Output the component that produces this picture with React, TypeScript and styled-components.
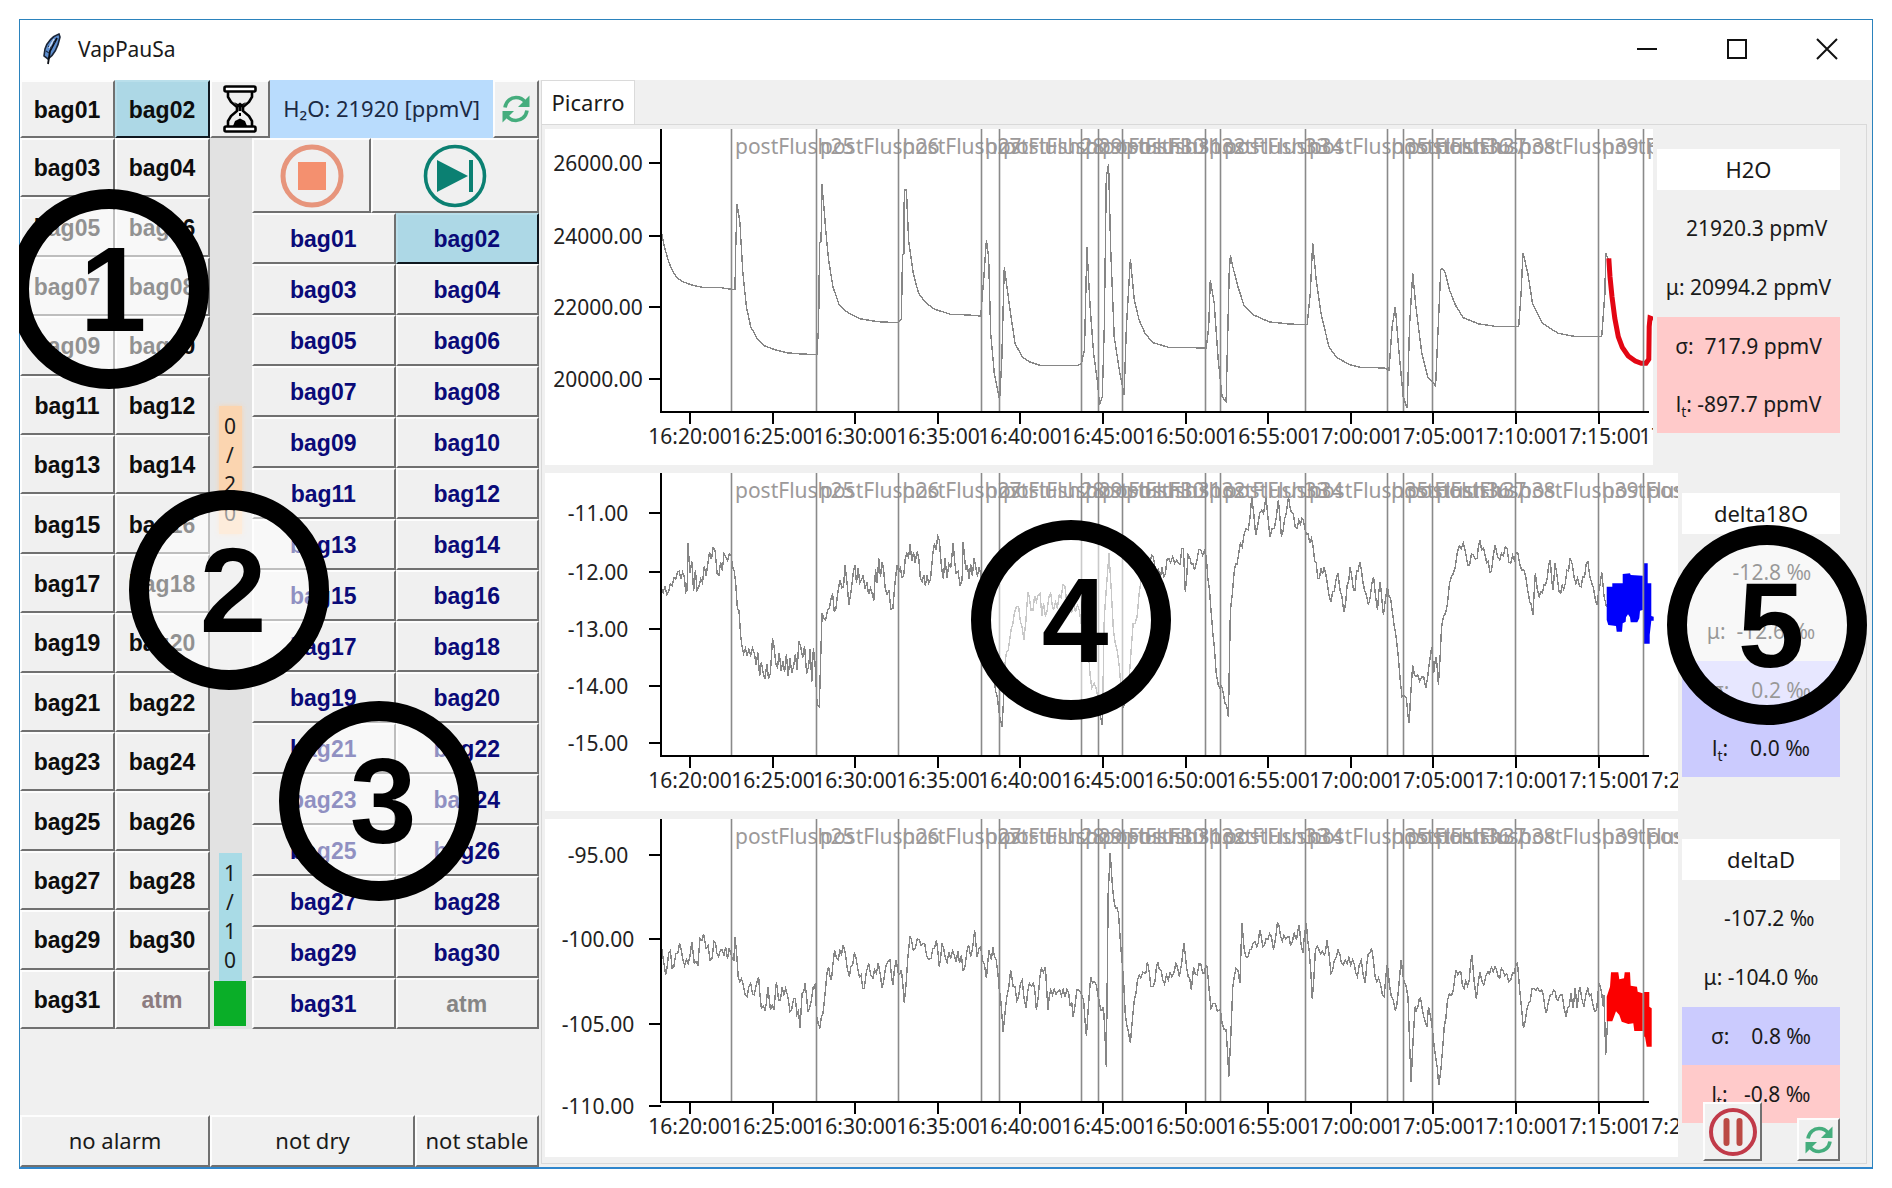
import React from "react";
import styled, { createGlobalStyle } from "styled-components";

const UI_FONT = `"Noto Sans", "Open Sans", sans-serif`;
const BOLD_FONT = `"Liberation Sans", Arial, sans-serif`;

const GlobalStyle = createGlobalStyle`
  *, *::before, *::after { box-sizing: border-box; }
  body { margin: 0; background: #fff; font-family: ${UI_FONT}; color: #1a1a1a; }
  button { font-family: inherit; color: inherit; margin: 0; }
`;

/* ---------- window frame ---------- */

const Desktop = styled.div`
  padding: 19px;
`;

const Window = styled.div`
  position: relative;
  display: flex;
  flex-direction: column;
  min-width: 1400px;
  min-height: calc(100vh - 38px);
  border: 1px solid #2b83bd;
  border-bottom: 2px solid #2f86cc;
  background: #f0f0f0;
`;

const TitleBar = styled.header`
  display: flex;
  align-items: center;
  height: 60px;
  padding: 0 34px 2px 22px;
  background: #fff;
`;

const Title = styled.h1`
  flex: 1;
  margin: 0 0 0 16px;
  font-size: 21px;
  line-height: 28px;
  font-weight: 400;
`;

const WindowControls = styled.div`
  display: flex;
  gap: 68px;
`;

const ControlButton = styled.button`
  display: block;
  width: 22px;
  height: 22px;
  padding: 0;
  border: 0;
  background: none;
`;

const Body = styled.div`
  flex: 1;
  display: flex;
  align-items: stretch;
`;

/* ---------- left side ---------- */

const Controls = styled.section`
  display: flex;
  flex-direction: column;
  flex: none;
  width: 519px;
`;

const RaisedButton = styled.button<{ $active?: boolean }>`
  display: flex;
  align-items: center;
  justify-content: center;
  min-width: 0;
  padding: 0;
  border: 2px solid;
  border-color: ${(p) => (p.$active ? "#b9dfeb #101820 #101820 #b9dfeb" : "#fdfdfd #707070 #707070 #fdfdfd")};
  background: ${(p) => (p.$active ? "#add8e6" : "#f0f0f0")};
`;

const BagButton = styled(RaisedButton)<{ $tone: string }>`
  padding: 1px 1px 0 0;
  font-family: ${BOLD_FONT};
  font-size: 23px;
  line-height: 26px;
  font-weight: 700;
  color: ${(p) => p.$tone};
`;

const StatusButton = styled(RaisedButton)`
  padding-bottom: 2px;
  font-size: 22px;
  line-height: 28px;
`;

const TopRow = styled.div`
  display: grid;
  grid-template-columns: 95px 95px 60px 1fr 46px;
  height: 58px;
`;

const Reading = styled.output`
  display: flex;
  align-items: center;
  justify-content: center;
  padding-bottom: 2px;
  background: #b9dcfd;
  font-size: 22px;
  line-height: 28px;
  color: #1c2a44;
`;

const Columns = styled.div`
  flex: 1;
  display: grid;
  grid-template-columns: 190px 42px 1fr;
`;

const ValveGrid = styled.div`
  display: grid;
  grid-template-columns: 1fr 1fr;
  grid-template-rows: repeat(15, 1fr);
`;

const Progress = styled.div`
  display: flex;
  flex-direction: column;
  align-items: center;
  padding: 268px 5px 3px 3px;
  background: #e2e2e2;
`;

const Counter = styled.div<{ $color: string; $soft?: boolean }>`
  display: flex;
  flex-direction: column;
  align-items: center;
  width: 23px;
  padding: 6px 0;
  background: ${(p) => p.$color};
  box-shadow: ${(p) => (p.$soft ? `0 0 5px ${p.$color}` : "none")};
  font-size: 21px;
  line-height: 29px;
`;

const Fill = styled.div`
  width: 32px;
  height: 45px;
  background: #0aae28;
`;

const Spring = styled.div`
  flex: 1;
`;

const Sequence = styled.div`
  display: flex;
  flex-direction: column;
`;

const Transport = styled.div`
  display: grid;
  grid-template-columns: 119px 1fr;
  height: 75px;
`;

const SequenceGrid = styled.div`
  flex: 1;
  display: grid;
  grid-template-columns: 1fr 1fr;
  grid-template-rows: repeat(16, 1fr);
`;

const StatusRow = styled.div`
  display: grid;
  grid-template-columns: 190px 205px 1fr;
  height: 52px;
  margin-top: 86px;
`;

/* ---------- right side ---------- */

const Notebook = styled.section`
  flex: 1;
  min-width: 0;
  display: flex;
  flex-direction: column;
  padding: 0 5px 3px 2px;
`;

const TabStrip = styled.div`
  display: flex;
  height: 44px;
`;

const Tab = styled.button`
  width: 94px;
  padding: 0 0 2px;
  border: 1px solid #dadada;
  border-bottom: 0;
  background: #fff;
  font-size: 22px;
  line-height: 28px;
`;

const Page = styled.div`
  flex: 1;
  display: flex;
  flex-direction: column;
  gap: 8px;
  padding: 4px 0 0 3px;
  border: 1px solid #d9d9d9;
`;

const Panel = styled.article`
  display: flex;
`;

const ChartArea = styled.div<{ $height: number }>`
  flex: 1;
  min-width: 0;
  height: ${(p) => p.$height}px;
  overflow: hidden;
  background: #fff;

  svg { display: block; }
  text { font-family: ${UI_FONT}; font-size: 21px; }
`;

const Stats = styled.div<{ $width: number }>`
  flex: none;
  width: ${(p) => p.$width}px;
  padding: 20px 26px 0 4px;
`;

const StatTitle = styled.h2`
  margin: 0 0 9px;
  padding: 6px 0;
  background: #fff;
  font-size: 22px;
  line-height: 29px;
  font-weight: 400;
  text-align: center;
`;

const Stat = styled.p<{ $bg?: string }>`
  margin: 0;
  padding: 15px 0;
  background: ${(p) => p.$bg || "transparent"};
  font-size: 21px;
  line-height: ${(p) => (p.$bg ? 28 : 29)}px;
  text-align: center;
  white-space: pre;

  sub { font-size: 14px; line-height: 0; }
`;

const FloatingTools = styled.div`
  position: absolute;
  right: 32px;
  bottom: 6px;
  display: flex;
  align-items: flex-end;
  gap: 35px;
`;

const ToolButton = styled(RaisedButton)<{ $size: number }>`
  width: ${(p) => p.$size}px;
  height: ${(p) => p.$size}px;
`;

/* ---------- numbered callouts ---------- */

const CalloutLayer = styled.div`
  position: absolute;
  inset: -1px;
  overflow: hidden;
  pointer-events: none;
`;

const Callout = styled.div<{ $x: number; $y: number }>`
  position: absolute;
  left: ${(p) => p.$x}px;
  top: ${(p) => p.$y}px;
  display: flex;
  align-items: center;
  justify-content: center;
  width: 200px;
  height: 200px;
  padding-left: 8px;
  border: 20px solid #000;
  border-radius: 50%;
  background: rgba(255, 255, 255, 0.55);
  background-clip: padding-box;
  color: #000;
  font-family: ${BOLD_FONT};
  font-size: 120px;
  line-height: 160px;
  font-weight: 700;
`;

/* ---------- icons ---------- */

const Feather = () => (
  <svg width="20" height="32" viewBox="0 0 20 32" aria-hidden="true">
    <path d="M17 1 C11 3 5 9 3 16 L2 23 L6 26 C12 22 16 14 18 4 Z" fill="#5e8fd0" stroke="#1b2638" strokeWidth="1.6" />
    <path d="M15 5 L8 18 L6 31" fill="none" stroke="#0c0f16" strokeWidth="1.8" />
    <path d="M4 18 L7 20 M6 13 L10 15 M10 8 L13 10" stroke="#20304a" strokeWidth="1.2" />
    <path d="M12 6 L7 15" stroke="#cfe0f6" strokeWidth="1.4" />
  </svg>
);

const Hourglass = () => (
  <svg width="34" height="48" viewBox="0 0 34 48" aria-hidden="true" fill="none" stroke="#000" strokeWidth="2.6">
    <rect x="1.5" y="1.5" width="31" height="5" rx="1.5" fill="#fff" />
    <rect x="1.5" y="41.5" width="31" height="5" rx="1.5" fill="#fff" />
    <path d="M5 7 V12 L8 17 L14 22 V26 L8 31 L5 36 V41 M29 7 V12 L26 17 L20 22 V26 L26 31 L29 36 V41" fill="none" />
    <path d="M11 17 L15 19 L17 17.500 L19 19 L23 17 L18.500 22.500 V26 H15.500 V22.500 Z" fill="#000" stroke="none" />
    <path d="M16 28h2v3h-2z" fill="#000" stroke="none" />
    <path d="M10 41 L12 36 L17 33.500 L22 36 L24 41 Z" fill="#000" stroke="none" />
  </svg>
);

const Refresh = () => (
  <svg width="28" height="28" viewBox="0 0 28 28" aria-hidden="true">
    <path d="M3 12.500 C4 6 9 2.500 14 2.500 C18 2.500 21 4 23 7" fill="none" stroke="#45ad7d" strokeWidth="3.6" />
    <path d="M27.500 0.500 V12 H16 Z" fill="#45ad7d" />
    <path d="M25 15.500 C24 22 19 25.500 14 25.500 C10 25.500 7 24 5 21" fill="none" stroke="#45ad7d" strokeWidth="3.6" />
    <path d="M0.500 27.500 V16 H12 Z" fill="#45ad7d" />
  </svg>
);

const Stop = () => (
  <svg width="64" height="64" viewBox="0 0 64 64" aria-hidden="true">
    <circle cx="32" cy="32" r="29" fill="none" stroke="#e7957c" strokeWidth="5" />
    <rect x="18" y="18" width="28" height="28" fill="#f4906f" />
  </svg>
);

const Skip = () => (
  <svg width="64" height="64" viewBox="0 0 64 64" aria-hidden="true">
    <circle cx="32" cy="32" r="29.500" fill="none" stroke="#0b8072" strokeWidth="3.6" />
    <path d="M14 16 L45 32 L14 48 Z" fill="#0b8072" />
    <rect x="46" y="16" width="4" height="32" fill="#0b8072" />
  </svg>
);

const Pause = () => (
  <svg width="50" height="50" viewBox="0 0 50 50" aria-hidden="true">
    <circle cx="25" cy="25" r="22" fill="none" stroke="#c13a49" strokeWidth="4" />
    <path d="M18.500 14 V36 M31.500 14 V36" stroke="#bb4a44" strokeWidth="6" strokeLinecap="round" />
  </svg>
);

/* ---------- charts ---------- */

type Mark = [x: number, y: number, spread?: number];

interface Piece {
  scaleX: number;
  offsetX: number;
  marks: Mark[];
}

interface ChartSpec {
  id: string;
  height: number;
  axisY: number;
  ticks: [label: string, y: number][];
  offsetY: number;
  noise: number;
  pieces: Piece[];
  current: React.ReactNode;
}

/* flush events and five-minute ticks share one time axis on all charts */
const EVENTS = [186, 271, 353, 436, 454, 536, 553, 577, 660, 675, 760, 842, 858, 887, 970, 1053, 1098];
const TIMES = ["16:20", "16:25", "16:30", "16:35", "16:40", "16:45", "16:50", "16:55", "17:00", "17:05", "17:10", "17:15", "17:20"];

const jitter = (n: number) => {
  const v = Math.sin(n * 127.1 + 3.7) * 43758.5453;
  return (0.35 + 0.9 * (v - Math.floor(v))) * (n % 2 ? 1 : -1);
};

/* joins the marks, adding measurement noise between them */
function trace(pieces: Piece[], offsetY: number, noise = 0): string {
  const out: string[] = [];
  let n = 0;
  pieces.forEach(({ scaleX, offsetX, marks }) => {
    marks.forEach(([x, y, spread = 0], i) => {
      const px = x / scaleX + offsetX;
      const py = y / 3 + offsetY;
      out.push(`${px.toFixed(1)},${py.toFixed(1)}`);
      const next = marks[i + 1];
      const amount = Math.max(spread, noise);
      if (!next || !amount) return;
      const nx = next[0] / scaleX + offsetX;
      const ny = next[1] / 3 + offsetY;
      const steps = Math.max(1, Math.round((nx - px) / 1.8));
      for (let k = 1; k < steps; k++) {
        n += 1;
        const t = k / steps;
        const s = (amount / 3) * jitter(n);
        out.push(`${(px + (nx - px) * t).toFixed(1)},${(py + (ny - py) * t + s).toFixed(1)}`);
      }
    });
  });
  return out.join(" ");
}

const first = (marks: Mark[]): Piece => ({ scaleX: 2.8, offsetX: -5, marks });
const second = (marks: Mark[]): Piece => ({ scaleX: 2.529, offsetX: 515, marks });

const outline = (pts: number[][], offsetY: number) =>
  pts.map(([x, y]) => `${(x / 3 + 1035).toFixed(1)},${(y / 3 + offsetY).toFixed(1)}`).join(" ");

const H2O: ChartSpec = {
  id: "h2o",
  height: 336,
  axisY: 283,
  ticks: [["26000.00", 34], ["24000.00", 107], ["22000.00", 178], ["20000.00", 250]],
  offsetY: -69,
  noise: 0,
  pieces: [
    first([[340,515],[347,555],[360,605],[372,635],[385,655],[400,665],[425,675],[455,682],[500,682],[535,688],[546,688],[548,565],[552,432],[560,490],[562,530],[568,640],[578,740],[590,800],[608,835],[628,857],[660,870],[690,878],[720,881],[775,884],[780,800],[783,550],[787,545],[789,373],[795,440],[800,510],[808,600],[820,680],[838,735],[862,758],[895,776],[945,785],[1003,788],[1012,778],[1015,585],[1019,580],[1020,390],[1026,390],[1032,540],[1045,640],[1060,700],[1080,728],[1105,748],[1150,763],[1200,765],[1234,768],[1243,650],[1250,540],[1256,590],[1262,820],[1272,940],[1287,1020],[1293,900],[1297,740],[1300,620],[1315,740],[1330,850],[1350,890],[1370,905],[1400,916],[1505,916],[1515,912]]),
    second([[53,915],[62,870],[68,560],[76,740],[85,880],[95,970],[100,1035],[107,1010],[112,800],[117,350],[123,312],[128,560],[137,830],[150,930],[162,1005],[168,800],[178,597],[188,720],[200,780],[215,820],[235,848],[275,862],[370,864],[376,800],[380,660],[390,730],[400,900],[410,1010],[420,1025],[428,640],[431,585],[437,620],[450,680],[465,735],[490,765],[530,786],[580,792],[625,794],[633,700],[639,548],[648,660],[660,760],[680,860],[700,893],[735,915],[760,922],[820,924],[832,930],[840,800],[848,740],[856,860],[868,1010],[878,1045],[884,800],[892,640],[900,740],[915,880],[930,950],[950,977],[958,760],[963,628],[968,626],[974,638],[985,690],[1000,735],[1020,773],[1060,792],[1100,799],[1160,800],[1166,700],[1171,578],[1183,640],[1195,730],[1220,790],[1260,820],[1300,829],[1370,830],[1378,700],[1380,580],[1388,600]]),
  ],
  current: (
    <polyline
      points={trace([second([[1388,595],[1391,650],[1396,710],[1403,775],[1412,830],[1422,862],[1437,888],[1455,903],[1470,910],[1482,910],[1489,898],[1490,800],[1492,774],[1500,778]])], -69)}
      fill="none"
      stroke="#e30613"
      strokeWidth="5"
    />
  ),
};

const D18O: ChartSpec = {
  id: "delta18O",
  height: 338,
  axisY: 283,
  ticks: [["-11.00", 40], ["-12.00", 99], ["-13.00", 156], ["-14.00", 213], ["-15.00", 270]],
  offsetY: -23,
  noise: 12,
  pieces: [
    first([[340,415,10],[360,425,15],[385,365,15],[404,380,25],[412,420],[414,280],[420,370,35],[445,410,20],[470,340,20],[490,300,10],[496,370,20],[520,320,12],[535,315,12],[548,400,20],[562,560],[570,610,15],[600,610,30],[625,670,35],[645,670],[651,565],[660,640,30],[710,650,35],[730,590,30],[752,650,50],[770,640,50],[782,770],[790,490,5],[800,510],[815,445,25],[828,480,25],[840,390],[850,410],[854,345],[865,465],[877,370,25],[900,390,25],[930,430,40],[958,335],[966,410,20],[988,475],[1000,345],[1018,380,20],[1027,310,25],[1060,320,25],[1070,395,15],[1093,390],[1100,310,20],[1118,270],[1124,350,30],[1150,355],[1157,280],[1165,370,25],[1182,390],[1185,275],[1192,360,25],[1220,350,30],[1234,370,15],[1262,560],[1275,720,20],[1287,800,40],[1294,830],[1302,640],[1315,570,10],[1328,490],[1340,470],[1355,570],[1366,425],[1375,480,20],[1395,435,25],[1415,500],[1430,430],[1438,480,20],[1470,410],[1478,470,20],[1510,480],[1535,600],[1545,715],[1552,700],[1562,740]]),
    second([[97,740],[107,826],[112,500],[118,400],[124,310],[135,540,5],[150,650,5],[160,775,10],[170,740],[177,650],[185,520,15],[195,500],[205,390,20],[232,315],[240,350,20],[262,380],[275,325,12],[300,340,15],[312,295],[317,425],[324,315],[340,360,12],[351,300],[370,320],[382,480,5],[395,670],[405,715],[413,730],[426,800],[431,480],[440,370,10],[452,310,15],[465,255,10],[476,240],[485,140],[495,255],[505,190,12],[515,190],[521,140],[531,260],[542,235,10],[552,150],[560,260],[572,190],[578,140],[585,185],[600,235,12],[612,205],[619,235],[640,290,10],[652,385],[668,350],[676,400,15],[685,455],[703,370],[718,485],[734,350],[742,420,20],[758,335],[770,420,20],[780,465],[793,380],[803,480],[810,395],[818,495],[828,410],[840,480],[850,560],[865,740],[876,745],[883,820],[892,645],[900,680],[915,680,15],[925,715],[934,640],[940,590],[945,670],[952,620,35],[957,705],[965,530],[975,490,15],[985,400],[995,370],[1005,305],[1020,280],[1031,345],[1045,315,10],[1055,325],[1062,270],[1075,315,15],[1091,365],[1101,285],[1112,330,10],[1126,290],[1140,340,15],[1158,310],[1168,360],[1178,380],[1188,455],[1196,495],[1202,370],[1212,440],[1228,405,12],[1240,330],[1247,420],[1252,340],[1262,425],[1278,400,15],[1290,325],[1300,380,12],[1318,410],[1335,335],[1345,400],[1358,465],[1370,365],[1376,440],[1382,470]]),
  ],
  current: (
    <g fill="#0000fb">
      <polygon points={outline([[80,380],[97,380],[97,370],[128,370],[128,342],[150,340],[152,345],[188,347],[188,450],[180,452],[178,475],[172,487],[152,487],[150,472],[144,463],[138,472],[137,485],[128,490],[126,515],[110,515],[108,498],[85,495],[80,480]], -13)} />
      <polygon points={outline([[190,310],[203,310],[203,370],[214,370],[214,468],[221,470],[221,482],[214,482],[209,525],[209,551],[190,551]], -13)} />
    </g>
  ),
};

const DELTAD: ChartSpec = {
  id: "deltaD",
  height: 338,
  axisY: 283,
  ticks: [["-95.00", 36], ["-100.00", 120], ["-105.00", 205], ["-110.00", 287]],
  offsetY: -19,
  noise: 12,
  pieces: [
    first([[340,440],[347,490],[352,525],[360,460,20],[375,500,20],[391,430],[400,480,20],[415,490],[425,425],[432,490],[442,495],[448,415],[458,402],[465,445,15],[482,475],[487,425],[500,470,20],[510,450,15],[535,465,10],[543,480],[546,410],[555,530,8],[568,550],[580,590,10],[590,550],[600,585,10],[612,530],[620,625],[630,630],[638,560],[645,630],[655,630],[662,545],[668,600,20],[688,565],[700,635],[715,595,25],[728,685],[734,580],[742,550],[750,635],[760,600,20],[770,555],[775,650],[784,685],[792,640],[800,560],[808,500],[816,540],[825,450],[835,480],[849,435],[866,530],[880,460],[890,510],[908,565],[920,490],[932,535],[947,490],[958,565],[968,500],[980,480],[988,555],[997,480],[1003,520],[1012,510],[1020,608],[1030,470],[1036,408],[1045,450],[1062,420],[1072,430],[1088,478],[1095,475],[1110,420],[1118,500],[1126,430],[1135,475,15],[1160,465,20],[1190,500],[1200,435],[1206,470],[1217,390],[1224,470],[1234,440],[1250,535],[1257,450],[1264,480],[1268,440],[1282,520],[1290,600],[1297,695],[1307,590],[1318,510],[1325,560,20],[1340,590],[1350,540],[1361,625],[1370,550],[1382,550],[1390,630],[1404,505],[1415,500],[1422,630],[1430,570],[1450,575,12],[1480,575,18],[1493,650],[1503,570],[1515,580],[1522,600],[1530,708],[1542,530],[1552,545],[1563,590]]),
    second([[97,590],[103,630],[110,620],[117,800],[122,280],[127,160],[133,265],[140,325],[148,340],[158,500],[165,640],[172,690],[178,730],[188,600],[200,525],[214,520],[221,485],[230,560],[240,545],[247,485],[260,540],[283,530],[293,490],[302,530],[313,430],[320,500],[332,570],[338,500],[347,525],[352,490],[365,520],[372,500],[382,625],[393,610],[403,630],[410,670],[420,690],[427,830],[437,560],[445,505],[450,510],[455,550],[460,370],[466,450],[476,470],[488,430],[498,440],[505,390],[513,440],[530,400],[540,450],[550,365],[558,410],[575,410],[583,435],[592,400],[598,420],[605,375],[614,460],[623,370],[630,450],[638,598],[646,450],[655,450],[668,465],[675,420],[685,520],[703,450],[712,490],[740,480,12],[752,530],[762,480],[772,550],[780,460],[788,445],[797,530],[810,550,12],[820,590],[828,490],[838,590],[848,632],[856,570],[863,480],[870,545],[880,590],[888,845],[898,620],[905,620],[912,595],[922,660],[928,680],[932,620],[942,690],[950,770],[958,855],[968,740],[980,600],[995,570],[1002,510],[1010,515],[1022,565],[1035,540],[1042,465],[1053,597],[1062,515],[1072,555],[1082,515],[1100,500],[1108,530],[1120,510],[1140,540],[1157,490],[1165,600],[1172,685],[1185,610],[1198,565],[1218,570],[1230,640],[1240,585],[1248,570],[1260,600],[1270,585],[1280,650],[1292,580],[1298,625],[1303,565],[1308,625],[1315,560],[1325,620],[1335,565],[1347,610],[1357,632],[1363,550],[1370,580],[1374,620],[1376,585],[1380,765],[1386,640]]),
  ],
  current: (
    <g fill="#fb0000">
      <polygon points={outline([[80,530],[90,500],[93,457],[115,457],[118,478],[132,475],[134,457],[150,457],[152,497],[171,500],[173,515],[188,520],[188,633],[163,633],[160,610],[145,612],[125,605],[118,585],[108,574],[97,604],[80,604]], 1)} />
      <polygon points={outline([[190,516],[208,516],[208,560],[215,565],[215,680],[200,680],[195,650],[190,650]], 1)} />
    </g>
  ),
};

const Chart = ({ spec }: { spec: ChartSpec }) => (
  <ChartArea $height={spec.height}>
    <svg width="1160" height={spec.height} role="img" aria-label={`${spec.id} over time`}>
      <polyline
        points={trace(spec.pieces, spec.offsetY, spec.noise)}
        fill="none"
        stroke="#868686"
        strokeWidth="1.4"
        shapeRendering="crispEdges"
      />
      {spec.current}
      {EVENTS.map((x, i) => (
        <g key={x}>
          <path d={`M${x + 0.5} 0V${spec.axisY}`} stroke="#8a8a8a" strokeWidth="1.6" />
          <text x={x + 4} y="25" fill="#9c9999">{`postFlush${25 + i}`}</text>
        </g>
      ))}
      <path d={`M116 0V${spec.axisY}H1104`} fill="none" stroke="#000" strokeWidth="2" />
      {spec.ticks.map(([label, y]) => (
        <g key={label}>
          <path d={`M104 ${y}H116`} stroke="#000" strokeWidth="2" />
          <text x="53" y={y + 8} textAnchor="middle" fill="#222">{label}</text>
        </g>
      ))}
      {TIMES.map((label, i) => {
        const x = 145 + Math.round(i * 82.6);
        return (
          <g key={label}>
            {x < 1104 && <path d={`M${x} ${spec.axisY}v12`} stroke="#000" strokeWidth="2" />}
            <text x={x} y={spec.axisY + 32} textAnchor="middle" fill="#222">{`${label}:00`}</text>
          </g>
        );
      })}
    </svg>
  </ChartArea>
);

/* ---------- content ---------- */

const BAGS = Array.from({ length: 31 }, (_, i) => `bag${String(i + 1).padStart(2, "0")}`);
const PINK = "#ffcaca";
const LILAC = "#cbcbfe";

const Slope = ({ children }: { children: string }) => (
  <>
    l<sub>t</sub>:{children}
  </>
);

const chars = (s: string) => s.split("").map((c, i) => <span key={i}>{c}</span>);

export default function App() {
  return (
    <Desktop>
      <GlobalStyle />
      <Window>
        <TitleBar>
          <Feather />
          <Title>VapPauSa</Title>
          <WindowControls>
            <ControlButton aria-label="Minimize">
              <svg width="22" height="22" aria-hidden="true"><path d="M1 11H21" stroke="#111" strokeWidth="2" /></svg>
            </ControlButton>
            <ControlButton aria-label="Maximize">
              <svg width="22" height="22" aria-hidden="true"><rect x="2" y="2" width="18" height="18" fill="none" stroke="#111" strokeWidth="2" /></svg>
            </ControlButton>
            <ControlButton aria-label="Close">
              <svg width="22" height="22" aria-hidden="true"><path d="M1 1L21 21M21 1L1 21" stroke="#111" strokeWidth="2" /></svg>
            </ControlButton>
          </WindowControls>
        </TitleBar>

        <Body>
          <Controls>
            <TopRow>
              <BagButton $tone="#0d0d0d">bag01</BagButton>
              <BagButton $tone="#0d0d0d" $active>bag02</BagButton>
              <RaisedButton aria-label="Wait"><Hourglass /></RaisedButton>
              <Reading>H₂O: 21920 [ppmV]</Reading>
              <RaisedButton aria-label="Refresh reading"><Refresh /></RaisedButton>
            </TopRow>

            <Columns>
              <ValveGrid>
                {BAGS.slice(2).map((b) => (
                  <BagButton key={b} $tone="#0d0d0d">{b}</BagButton>
                ))}
                <BagButton $tone="#8c7c80">atm</BagButton>
              </ValveGrid>

              <Progress>
                <Counter $color="#fbd5b0" $soft>{chars("0/20")}</Counter>
                <Spring />
                <Counter $color="#a9dbe6">{chars("1/10")}</Counter>
                <Fill />
              </Progress>

              <Sequence>
                <Transport>
                  <RaisedButton aria-label="Stop sequence"><Stop /></RaisedButton>
                  <RaisedButton aria-label="Next in sequence"><Skip /></RaisedButton>
                </Transport>
                <SequenceGrid>
                  {BAGS.map((b) => (
                    <BagButton key={b} $tone="#0a0a78" $active={b === "bag02"}>{b}</BagButton>
                  ))}
                  <BagButton $tone="#858585">atm</BagButton>
                </SequenceGrid>
              </Sequence>
            </Columns>

            <StatusRow>
              <StatusButton>no alarm</StatusButton>
              <StatusButton>not dry</StatusButton>
              <StatusButton>not stable</StatusButton>
            </StatusRow>
          </Controls>

          <Notebook>
            <TabStrip>
              <Tab>Picarro</Tab>
            </TabStrip>
            <Page>
              <Panel>
                <Chart spec={H2O} />
                <Stats $width={213}>
                  <StatTitle>H2O</StatTitle>
                  <Stat>{"   21920.3 ppmV"}</Stat>
                  <Stat>μ: 20994.2 ppmV</Stat>
                  <Stat $bg={PINK}>{"σ:  717.9 ppmV"}</Stat>
                  <Stat $bg={PINK}><Slope>{" -897.7 ppmV"}</Slope></Stat>
                </Stats>
              </Panel>
              <Panel>
                <Chart spec={D18O} />
                <Stats $width={188}>
                  <StatTitle>delta18O</StatTitle>
                  <Stat>{"    -12.8 ‰"}</Stat>
                  <Stat>{"μ:  -12.6 ‰"}</Stat>
                  <Stat $bg={LILAC}>{"σ:    0.2 ‰"}</Stat>
                  <Stat $bg={LILAC}><Slope>{"    0.0 ‰"}</Slope></Stat>
                </Stats>
              </Panel>
              <Panel>
                <Chart spec={DELTAD} />
                <Stats $width={188}>
                  <StatTitle>deltaD</StatTitle>
                  <Stat>{"   -107.2 ‰"}</Stat>
                  <Stat>μ: -104.0 ‰</Stat>
                  <Stat $bg={LILAC}>{"σ:    0.8 ‰"}</Stat>
                  <Stat $bg={PINK}><Slope>{"   -0.8 ‰"}</Slope></Stat>
                </Stats>
              </Panel>
            </Page>
          </Notebook>
        </Body>

        <FloatingTools>
          <ToolButton $size={59} aria-label="Pause"><Pause /></ToolButton>
          <ToolButton $size={43} aria-label="Refresh charts"><Refresh /></ToolButton>
        </FloatingTools>

        <CalloutLayer>
          <Callout $x={-10} $y={170}>1</Callout>
          <Callout $x={110} $y={471}>2</Callout>
          <Callout $x={260} $y={682}>3</Callout>
          <Callout $x={952} $y={501}>4</Callout>
          <Callout $x={1648} $y={506}>5</Callout>
        </CalloutLayer>
      </Window>
    </Desktop>
  );
}
